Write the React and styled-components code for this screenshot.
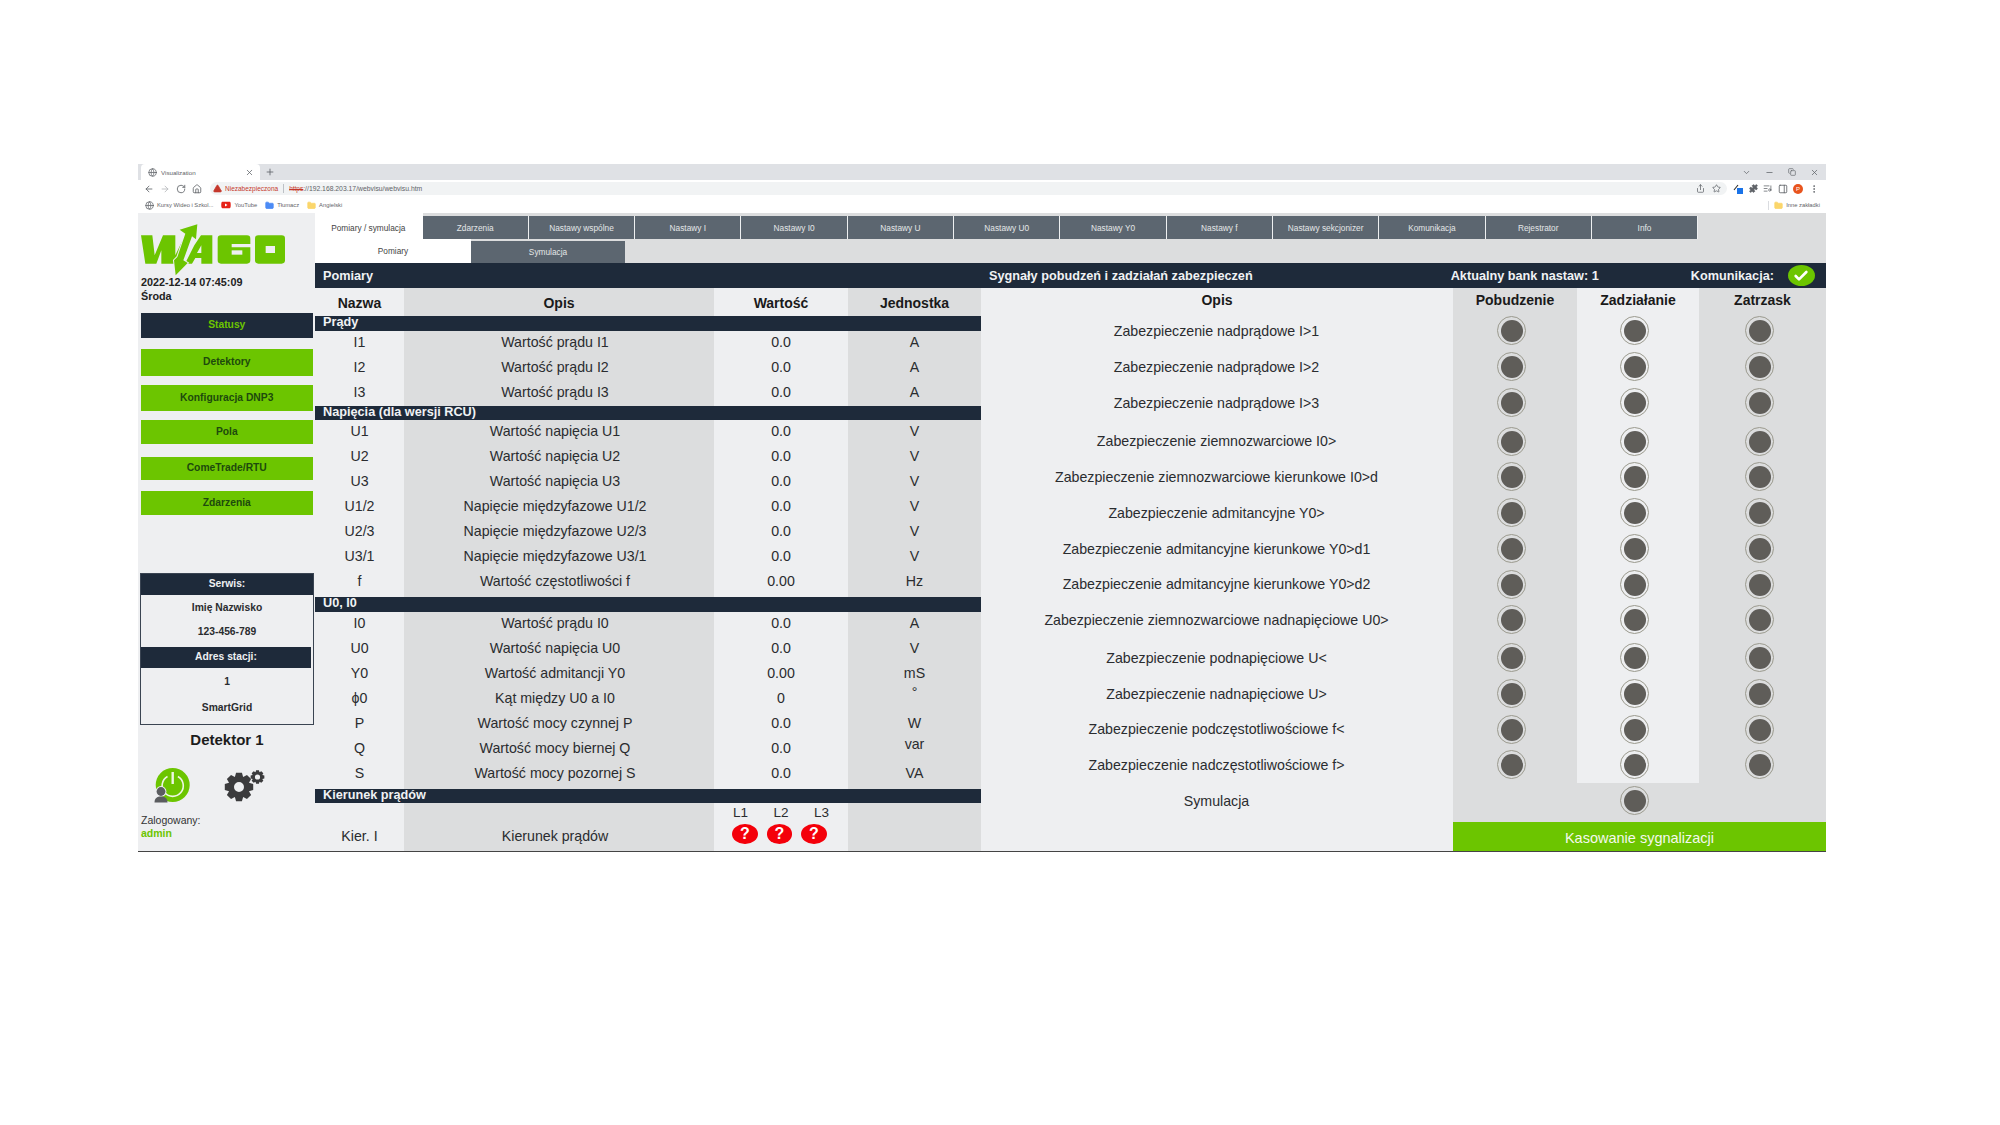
import React from 'react';
import styled, { createGlobalStyle } from 'styled-components';
import {
  ArrowLeft,
  ArrowRight,
  RotateCw,
  House,
  TriangleAlert,
  Globe,
  X,
  Plus,
  Minus,
  ChevronDown,
  Copy,
  Share,
  Star,
  Puzzle,
  ListMusic,
  PanelRight,
  EllipsisVertical,
  Folder,
  Check,
} from 'lucide-react';
import { FaYoutube } from 'react-icons/fa';

const GREEN = '#6cc500';
const NAVY = '#1e2a3a';
const LIGHT = '#eeeff1';
const GREY = '#dcddde';

const GlobalStyle = createGlobalStyle`
  body {
    margin: 0;
    background: #fff;
    font-family: "Liberation Sans", Arial, sans-serif;
    color: #2a2c2f;
  }
`;

const Page = styled.div`
  padding: 164px 0 0 138px;
`;
const Browser = styled.div`
  width: 1688px;
`;

/* chrome of the browser */
const TabStrip = styled.div`
  height: 16px;
  background: #dfe1e5;
  display: flex;
  align-items: stretch;
  padding-left: 3px;
  color: #5f6368;
`;
const BrowserTab = styled.div`
  width: 119px;
  background: #fff;
  border-radius: 4px 4px 0 0;
  display: flex;
  align-items: center;
  gap: 4px;
  padding: 0 6px 0 7px;
  box-sizing: border-box;
  font-size: 6.2px;
  span {
    flex: 1;
  }
`;
const NewTab = styled.div`
  width: 20px;
  display: flex;
  align-items: center;
  justify-content: center;
`;
const WindowButtons = styled.div`
  margin-left: auto;
  display: flex;
  align-items: center;
  gap: 14px;
  padding-right: 7px;
`;
const Toolbar = styled.div`
  height: 17px;
  background: #fff;
  display: flex;
  align-items: center;
  color: #5f6368;
  padding-left: 6px;
  gap: 6px;
`;
const AddressPill = styled.div`
  width: 1517px;
  margin-left: 2px;
  height: 13px;
  border-radius: 7px;
  background: #f1f3f4;
  display: flex;
  align-items: center;
  font-size: 6.8px;
  padding: 0 4px 0 3px;
  box-sizing: border-box;
  gap: 3px;
  color: #5f6368;
`;
const Unsafe = styled.span`
  color: #c5382c;
  font-size: 6.5px;
`;
const Struck = styled(Unsafe)`
  text-decoration: line-through;
`;
const Divider = styled.span`
  width: 1px;
  height: 9px;
  background: #bdc1c6;
  margin: 0 2px;
`;
const PillEnd = styled.div`
  margin-left: auto;
  display: flex;
  gap: 7px;
  padding-right: 2px;
`;
const Extensions = styled.div`
  display: flex;
  align-items: center;
  gap: 5.5px;
`;
const Avatar = styled.div`
  width: 10px;
  height: 10px;
  border-radius: 50%;
  background: #e8541e;
  color: #fff;
  font-size: 6px;
  line-height: 10px;
  text-align: center;
`;
const Bookmarks = styled.div`
  height: 16px;
  background: #fff;
  display: flex;
  align-items: center;
  font-size: 5.8px;
  color: #5f6368;
  padding: 0 6px 0 7px;
  gap: 8px;
`;
const Bookmark = styled.div`
  display: flex;
  align-items: center;
  gap: 3px;
  margin-left: ${p => (p.$end ? 'auto' : '0')};
  padding-left: ${p => (p.$end ? '5px' : '0')};
  border-left: ${p => (p.$end ? '1px solid #dadce0' : 'none')};
`;

/* application */
const AppFrame = styled.div`
  display: flex;
  height: 638px;
  border-bottom: 1.5px solid #444;
`;
const Sidebar = styled.aside`
  width: 177px;
  flex: none;
  background: ${LIGHT};
  padding: 8.5px 0 0 2px;
  box-sizing: border-box;
  display: flex;
  flex-direction: column;
`;
const DateLine = styled.div`
  font-size: 10.8px;
  line-height: 13px;
  font-weight: bold;
  color: #222;
  padding-left: 1px;
  margin-top: ${p => p.$top || 0}px;
`;
const LogoSvg = styled.svg`
  display: block;
  flex: none;
`;
const NavButton = styled.div`
  width: 172.5px;
  height: ${p => p.$h}px;
  margin-top: ${p => p.$top}px;
  margin-left: 0.5px;
  flex: none;
  background: ${p => (p.$active ? NAVY : GREEN)};
  color: ${p => (p.$active ? GREEN : '#1d4a0d')};
  display: flex;
  align-items: center;
  justify-content: center;
  font-size: 10.3px;
  font-weight: bold;
  padding-bottom: 2px;
  box-sizing: border-box;
`;
const ServiceBox = styled.div`
  margin-top: 58px;
  width: 174px;
  height: 152px;
  box-sizing: border-box;
  border: 1.5px solid #3a4452;
  flex: none;
  background: ${LIGHT};
`;
const ServiceHead = styled.div`
  height: ${p => p.$h}px;
  margin-right: ${p => p.$gap || 0}px;
  background: ${NAVY};
  color: #eef0f2;
  font-size: 10.3px;
  font-weight: bold;
  display: flex;
  align-items: center;
  justify-content: center;
  padding-bottom: 2px;
  box-sizing: border-box;
`;
const ServiceLine = styled.div`
  height: ${p => p.$h}px;
  font-size: 10.3px;
  font-weight: bold;
  color: #2a2c2f;
  display: flex;
  align-items: center;
  justify-content: center;
`;
const DeviceName = styled.div`
  margin-top: 6px;
  width: 174px;
  font-size: 15px;
  line-height: 18px;
  font-weight: bold;
  color: #1c1c1c;
  text-align: center;
`;
const IconRow = styled.div`
  margin: 16px 0 0 10px;
  height: 42px;
  display: flex;
  align-items: flex-start;
  gap: 32px;
`;
const GearSlot = styled.div`
  margin-top: 3px;
`;
const LoginLine = styled.div`
  font-size: 10.5px;
  line-height: 13px;
  color: ${p => (p.$green ? GREEN : '#333')};
  font-weight: ${p => (p.$green ? 'bold' : 'normal')};
  margin-top: ${p => p.$top || 0}px;
  padding-left: 1px;
`;

const Main = styled.main`
  flex: 1;
  min-width: 0;
  display: flex;
  flex-direction: column;
`;
const TabBar = styled.nav`
  height: 50px;
  flex: none;
  background: ${GREY};
`;
const TopTabs = styled.div`
  display: flex;
  height: 26px;
`;
const TopTab = styled.div`
  width: ${p => (p.$active ? '107.6px' : '106.3px')};
  flex: none;
  margin-top: ${p => (p.$active ? '0' : '3px')};
  box-sizing: border-box;
  border-right: 1px solid ${p => (p.$active ? 'transparent' : '#eef0f1')};
  background: ${p => (p.$active ? '#fff' : '#5c6670')};
  color: ${p => (p.$active ? '#444' : '#e4e6e8')};
  font-size: 8.3px;
  display: flex;
  align-items: center;
  justify-content: center;
  padding-top: ${p => (p.$active ? '3px' : '0')};
`;
const SubTabs = styled.div`
  display: flex;
  height: 24px;
`;
const SubTab = styled.div`
  width: ${p => p.$w}px;
  margin-top: ${p => (p.$active ? '0' : '2px')};
  background: ${p => (p.$active ? '#fff' : '#5c6670')};
  color: ${p => (p.$active ? '#444' : '#e4e6e8')};
  font-size: 8.3px;
  display: flex;
  align-items: center;
  justify-content: center;
`;
const Panels = styled.div`
  flex: 1;
  display: flex;
  min-height: 0;
`;
const LeftPanel = styled.section`
  width: 666px;
  flex: none;
  display: flex;
  flex-direction: column;
`;
const RightPanel = styled.section`
  flex: 1;
  display: flex;
  flex-direction: column;
  background: ${LIGHT};
`;
const PanelHead = styled.div`
  height: 25px;
  flex: none;
  background: ${NAVY};
  color: #f0f2f4;
  font-size: 12.7px;
  font-weight: bold;
  display: flex;
  align-items: center;
  padding-left: ${p => p.$pad}px;
`;
const BankLabel = styled.span`
  margin-left: 198px;
`;
const CommLabel = styled.span`
  margin-left: 92px;
`;
const CommOk = styled.span`
  margin-left: 14px;
  width: 27px;
  height: 21px;
  border-radius: 50%;
  background: ${GREEN};
  display: flex;
  align-items: center;
  justify-content: center;
  color: #fff;
`;

/* measurements table */
const MeasureRow = styled.div`
  display: grid;
  grid-template-columns: 89px 310px 134px 133px;
  height: ${p => p.$h || 25}px;
  flex: none;
  & > :nth-child(odd) {
    background: ${LIGHT};
  }
  & > :nth-child(even) {
    background: ${GREY};
  }
`;
const MeasureCell = styled.div`
  font-size: 14.2px;
  line-height: 22px;
  text-align: center;
  padding-right: ${p => p.$shift || 0}px;
  padding-top: ${p => p.$top || 0}px;
  box-sizing: border-box;
`;
const UnitText = styled.div`
  margin-top: ${p => p.$lift || 0}px;
`;
const TableHead = styled(MeasureCell)`
  font-weight: bold;
  font-size: 14px;
  color: #1a1a1a;
  line-height: 30px;
`;
const SectionBar = styled.div`
  height: ${p => p.$h}px;
  flex: none;
  background: ${NAVY};
  color: #f0f2f4;
  font-size: 12.7px;
  line-height: 12px;
  font-weight: bold;
  padding-left: 8px;
  white-space: nowrap;
`;
const PhaseCell = styled.div`
  display: flex;
  flex-direction: column;
  align-items: center;
  padding-top: 2px;
`;
const PhaseLabels = styled.div`
  display: grid;
  grid-template-columns: repeat(3, 40.5px);
  font-size: 13.5px;
  line-height: 16px;
  text-align: center;
`;
const PhaseIcons = styled.div`
  display: flex;
  gap: 9px;
  margin: 2.5px 3px 0 0;
`;
const Unknown = styled.div`
  width: 25.5px;
  height: 20px;
  border-radius: 50%;
  background: #f4000a;
  color: #fff;
  font-weight: bold;
  font-size: 16px;
  line-height: 20px;
  text-align: center;
`;

/* protection signals */
const SignalRow = styled.div`
  display: grid;
  grid-template-columns: 472px 124px 122px 127px;
  height: ${p => p.$h}px;
  flex: none;
  & > * {
    padding-top: ${p => p.$gap || 0}px;
  }
  & > :nth-child(2),
  & > :nth-child(4) {
    background: ${GREY};
  }
  & > :nth-child(3) {
    background: ${p => (p.$closing ? GREY : LIGHT)};
  }
`;
const SignalHead = styled.div`
  font-size: 14px;
  font-weight: bold;
  color: #1a1a1a;
  text-align: center;
  line-height: 25px;
`;
const SignalName = styled.div`
  font-size: 14.2px;
  text-align: center;
  display: flex;
  align-items: center;
  justify-content: center;
  padding-right: 1px;
  margin-top: 0.5px;
  padding-bottom: ${p => p.$lift || 0}px;
  box-sizing: border-box;
`;
const LedCell = styled.div`
  display: flex;
  align-items: center;
  justify-content: center;
  padding-right: 7px;
  padding-bottom: ${p => p.$lift || 0}px;
  box-sizing: border-box;
`;
const Led = styled.div`
  width: 29px;
  height: 29px;
  box-sizing: border-box;
  border-radius: 50%;
  border: 1.5px solid #9b9a8e;
  padding: 2.5px;
  background: #5f5d59;
  background-clip: content-box;
`;
const ResetRow = styled.div`
  flex: 1;
  display: flex;
  justify-content: flex-end;
`;
const ResetButton = styled.div`
  width: 373px;
  background: ${GREEN};
  color: #f4f8ee;
  font-size: 14.5px;
  display: flex;
  align-items: center;
  justify-content: center;
  padding-top: 3px;
  box-sizing: border-box;
`;

const gearPath = (cx, cy, outer, inner, hole, teeth) => {
  const step = (Math.PI * 2) / teeth;
  const pts = [];
  for (let i = 0; i < teeth; i++) {
    const a = i * step - Math.PI / 2;
    [
      [inner, -0.5],
      [outer, -0.26],
      [outer, 0.26],
      [inner, 0.5],
    ].forEach(([r, k]) => {
      pts.push(`${(cx + r * Math.cos(a + k * step)).toFixed(2)} ${(cy + r * Math.sin(a + k * step)).toFixed(2)}`);
    });
  }
  return `M${pts.join('L')}Z M${cx - hole} ${cy}a${hole} ${hole} 0 1 0 ${hole * 2} 0a${hole} ${hole} 0 1 0 ${-hole * 2} 0Z`;
};

const WagoLogo = () => (
  <LogoSvg width="150" height="55" viewBox="15 20 450 165">
    <g fill={GREEN}>
      <path d="M18 60H52L59 120 84 60H121V120L150 60H165L125 145H109 79V105L64 145H31Z" />
      <path fillRule="evenodd" d="M178 90L198 60H232V145H199V128H181L171 145H150ZM199 90V113H186Z" />
      <path d="M258 60h78q10 0 10 10v16h-56v10h56v39q0 10-10 10h-78q-10 0-10-10V70q0-10 10-10z" />
      <path d="M370 60h70q10 0 10 10v65q0 10-10 10h-70q-10 0-10-10V70q0-10 10-10z" />
    </g>
    <path
      d="M187 27L183 72 171 63 145 135 158 143 122 180 117 135 127 125 151 55 134 43Z"
      fill={GREEN}
      stroke={LIGHT}
      strokeWidth="6"
      paintOrder="stroke"
    />
    <rect x="290" y="105" width="32" height="13" fill={LIGHT} />
    <rect x="392" y="92" width="28" height="21" fill={LIGHT} />
  </LogoSvg>
);

const PowerIcon = () => (
  <svg width="40" height="42" viewBox="0 0 40 42">
    <circle cx="22.7" cy="20" r="17" fill={GREEN} />
    <path d="M17.5 11.5a10.6 10.6 0 1 0 10.4 0" fill="none" stroke="#eef6e2" strokeWidth="1.6" />
    <path d="M22.7 7v12" stroke="#eef6e2" strokeWidth="2.4" />
    <circle cx="11" cy="26.5" r="5.4" fill={LIGHT} />
    <circle cx="11" cy="26.5" r="4.4" fill="#5b5d60" />
    <path d="M4.5 37.5c0-4.2 2.5-6 6.5-6s6.5 1.8 6.5 6z" fill="#5b5d60" />
  </svg>
);

const GearsIcon = () => (
  <svg width="44" height="34" viewBox="0 0 44 34" fill="#3b3b3d" fillRule="evenodd">
    <path d={gearPath(17, 19, 14.5, 10.8, 5, 8)} />
    <path d={gearPath(35.5, 9, 7, 5.2, 2.6, 8)} />
  </svg>
);

const TABS = ['Pomiary / symulacja', 'Zdarzenia', 'Nastawy wspólne', 'Nastawy I', 'Nastawy I0', 'Nastawy U', 'Nastawy U0', 'Nastawy Y0', 'Nastawy f', 'Nastawy sekcjonizer', 'Komunikacja', 'Rejestrator', 'Info'];

const NAV = [
  { label: 'Statusy', h: 25, top: 10.5, active: true },
  { label: 'Detektory', h: 27, top: 11 },
  { label: 'Konfiguracja DNP3', h: 26, top: 9 },
  { label: 'Pola', h: 24, top: 9 },
  { label: 'ComeTrade/RTU', h: 23, top: 13 },
  { label: 'Zdarzenia', h: 24, top: 11 },
];

const CURRENTS = [
  ['I1', 'Wartość prądu I1', '0.0', 'A'],
  ['I2', 'Wartość prądu I2', '0.0', 'A'],
  ['I3', 'Wartość prądu I3', '0.0', 'A'],
];
const VOLTAGES = [
  ['U1', 'Wartość napięcia U1', '0.0', 'V'],
  ['U2', 'Wartość napięcia U2', '0.0', 'V'],
  ['U3', 'Wartość napięcia U3', '0.0', 'V'],
  ['U1/2', 'Napięcie międzyfazowe U1/2', '0.0', 'V'],
  ['U2/3', 'Napięcie międzyfazowe U2/3', '0.0', 'V'],
  ['U3/1', 'Napięcie międzyfazowe U3/1', '0.0', 'V'],
  ['f', 'Wartość częstotliwości f', '0.00', 'Hz'],
];
const ZERO = [
  ['I0', 'Wartość prądu I0', '0.0', 'A'],
  ['U0', 'Wartość napięcia U0', '0.0', 'V'],
  ['Y0', 'Wartość admitancji Y0', '0.00', 'mS'],
  ['ϕ0', 'Kąt między U0 a I0', '0', '°', -6],
  ['P', 'Wartość mocy czynnej P', '0.0', 'W'],
  ['Q', 'Wartość mocy biernej Q', '0.0', 'var', -4],
  ['S', 'Wartość mocy pozornej S', '0.0', 'VA'],
];

const SIGNALS = [
  ['Zabezpieczenie nadprądowe I>1'],
  ['Zabezpieczenie nadprądowe I>2'],
  ['Zabezpieczenie nadprądowe I>3'],
  ['Zabezpieczenie ziemnozwarciowe I0>', 3],
  ['Zabezpieczenie ziemnozwarciowe kierunkowe I0>d'],
  ['Zabezpieczenie admitancyjne Y0>'],
  ['Zabezpieczenie admitancyjne kierunkowe Y0>d1'],
  ['Zabezpieczenie admitancyjne kierunkowe Y0>d2'],
  ['Zabezpieczenie ziemnozwarciowe nadnapięciowe U0>'],
  ['Zabezpieczenie podnapięciowe U<', 2],
  ['Zabezpieczenie nadnapięciowe U>'],
  ['Zabezpieczenie podczęstotliwościowe f<'],
  ['Zabezpieczenie nadczęstotliwościowe f>'],
];

const Measures = ({ rows, last }) =>
  rows.map(([name, desc, value, unit, lift], i) => (
    <MeasureRow key={name} $h={i === rows.length - 1 ? last : 25}>
      <MeasureCell>{name}</MeasureCell>
      <MeasureCell $shift={8}>{desc}</MeasureCell>
      <MeasureCell>{value}</MeasureCell>
      <MeasureCell>
        <UnitText $lift={lift}>{unit}</UnitText>
      </MeasureCell>
    </MeasureRow>
  ));

const App = () => (
  <Page>
    <GlobalStyle />
    <Browser>
      <TabStrip>
        <BrowserTab>
          <Globe size={9} />
          <span>Visualization</span>
          <X size={9} />
        </BrowserTab>
        <NewTab>
          <Plus size={10} />
        </NewTab>
        <WindowButtons>
          <ChevronDown size={9} />
          <Minus size={9} />
          <Copy size={8} />
          <X size={9} />
        </WindowButtons>
      </TabStrip>
      <Toolbar>
        <ArrowLeft size={10} />
        <ArrowRight size={10} color="#b4b7bb" />
        <RotateCw size={10} />
        <House size={10} />
        <AddressPill>
          <TriangleAlert size={9} fill="#c5382c" color="#c5382c" />
          <Unsafe>Niezabezpieczona</Unsafe>
          <Divider />
          <span>
            <Struck>https</Struck>://192.168.203.17/webvisu/webvisu.htm
          </span>
          <PillEnd>
            <Share size={9} />
            <Star size={9} />
          </PillEnd>
        </AddressPill>
        <Extensions>
          <svg width="10" height="10" viewBox="0 0 10 10">
            <path d="M1 6l4-5" stroke="#333" strokeWidth="1.2" />
            <rect x="4" y="4" width="6" height="6" fill="#1a73e8" />
          </svg>
          <Puzzle size={9} fill="#5f6368" />
          <ListMusic size={9} />
          <PanelRight size={10} />
          <Avatar>P</Avatar>
          <EllipsisVertical size={10} />
        </Extensions>
      </Toolbar>
      <Bookmarks>
        <Bookmark>
          <Globe size={9} />
          Kursy Wideo i Szkol...
        </Bookmark>
        <Bookmark>
          <FaYoutube size={10} color="#e62117" />
          YouTube
        </Bookmark>
        <Bookmark>
          <Folder size={9} fill="#4c8bf5" color="#4c8bf5" />
          Tłumacz
        </Bookmark>
        <Bookmark>
          <Folder size={9} fill="#fbd66b" color="#fbd66b" />
          Angielski
        </Bookmark>
        <Bookmark $end>
          <Folder size={9} fill="#fbd66b" color="#fbd66b" />
          Inne zakładki
        </Bookmark>
      </Bookmarks>

      <AppFrame>
        <Sidebar>
          <WagoLogo />
          <DateLine $top={-1}>2022-12-14 07:45:09</DateLine>
          <DateLine $top={1}>Środa</DateLine>
          {NAV.map(n => (
            <NavButton key={n.label} $h={n.h} $top={n.top} $active={n.active}>
              {n.label}
            </NavButton>
          ))}
          <ServiceBox>
            <ServiceHead $h={21}>Serwis:</ServiceHead>
            <ServiceLine $h={24}>Imię Nazwisko</ServiceLine>
            <ServiceLine $h={24}>123-456-789</ServiceLine>
            <ServiceLine $h={4} />
            <ServiceHead $h={21} $gap={2}>Adres stacji:</ServiceHead>
            <ServiceLine $h={26}>1</ServiceLine>
            <ServiceLine $h={26}>SmartGrid</ServiceLine>
          </ServiceBox>
          <DeviceName>Detektor 1</DeviceName>
          <IconRow>
            <PowerIcon />
            <GearSlot>
              <GearsIcon />
            </GearSlot>
          </IconRow>
          <LoginLine $top={6.5}>Zalogowany:</LoginLine>
          <LoginLine $green>admin</LoginLine>
        </Sidebar>

        <Main>
          <TabBar>
            <TopTabs>
              {TABS.map((t, i) => (
                <TopTab key={t} $active={i === 0}>
                  {t}
                </TopTab>
              ))}
            </TopTabs>
            <SubTabs>
              <SubTab $w={156} $active>Pomiary</SubTab>
              <SubTab $w={154}>Symulacja</SubTab>
            </SubTabs>
          </TabBar>
          <Panels>
            <LeftPanel>
              <PanelHead $pad={8}>Pomiary</PanelHead>
              <MeasureRow $h={28}>
                <TableHead>Nazwa</TableHead>
                <TableHead>Opis</TableHead>
                <TableHead>Wartość</TableHead>
                <TableHead>Jednostka</TableHead>
              </MeasureRow>
              <SectionBar $h={15}>Prądy</SectionBar>
              <Measures rows={CURRENTS} last={25} />
              <SectionBar $h={14}>Napięcia (dla wersji RCU)</SectionBar>
              <Measures rows={VOLTAGES} last={27} />
              <SectionBar $h={15}>U0, I0</SectionBar>
              <Measures rows={ZERO} last={27} />
              <SectionBar $h={14}>Kierunek prądów</SectionBar>
              <MeasureRow $h={48}>
                <MeasureCell $top={22}>Kier. I</MeasureCell>
                <MeasureCell $shift={8} $top={22}>Kierunek prądów</MeasureCell>
                <PhaseCell>
                  <PhaseLabels>
                    <span>L1</span>
                    <span>L2</span>
                    <span>L3</span>
                  </PhaseLabels>
                  <PhaseIcons>
                    <Unknown>?</Unknown>
                    <Unknown>?</Unknown>
                    <Unknown>?</Unknown>
                  </PhaseIcons>
                </PhaseCell>
                <MeasureCell />
              </MeasureRow>
            </LeftPanel>

            <RightPanel>
              <PanelHead $pad={8}>
                Sygnały pobudzeń i zadziałań zabezpieczeń
                <BankLabel>Aktualny bank nastaw: 1</BankLabel>
                <CommLabel>Komunikacja:</CommLabel>
                <CommOk>
                  <Check size={16} strokeWidth={4} />
                </CommOk>
              </PanelHead>
              <SignalRow $h={25}>
                <SignalHead>Opis</SignalHead>
                <SignalHead>Pobudzenie</SignalHead>
                <SignalHead>Zadziałanie</SignalHead>
                <SignalHead>Zatrzask</SignalHead>
              </SignalRow>
              {SIGNALS.map(([name, gap]) => (
                <SignalRow key={name} $h={35.75 + (gap || 0)} $gap={gap}>
                  <SignalName>{name}</SignalName>
                  <LedCell>
                    <Led />
                  </LedCell>
                  <LedCell>
                    <Led />
                  </LedCell>
                  <LedCell>
                    <Led />
                  </LedCell>
                </SignalRow>
              ))}
              <SignalRow $h={39} $closing>
                <SignalName $lift={3}>Symulacja</SignalName>
                <LedCell />
                <LedCell $lift={3}>
                  <Led />
                </LedCell>
                <LedCell />
              </SignalRow>
              <ResetRow>
                <ResetButton>Kasowanie sygnalizacji</ResetButton>
              </ResetRow>
            </RightPanel>
          </Panels>
        </Main>
      </AppFrame>
    </Browser>
  </Page>
);

export default App;
